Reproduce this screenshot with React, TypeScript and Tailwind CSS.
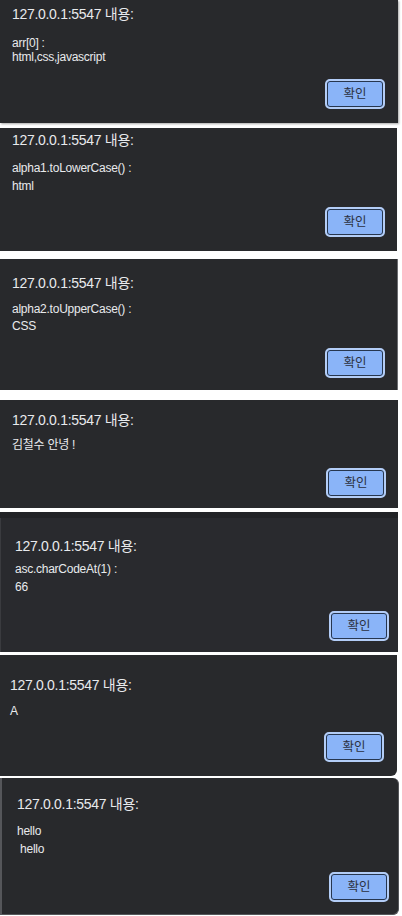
import React from "react";

type D = {
  box: string;
  title: string;
  body: string;
  btnRow: string;
  lines: string[];
};

const FONT = { fontFamily: '"Liberation Sans", "Noto Sans CJK KR", sans-serif' };

function OkButton() {
  return (
    <div className="w-[60px] h-[30px] rounded-[5px] border-2 border-[#b3cdf7] bg-[#8ab4f8] shadow-[inset_0_0_0_1px_#26364f] flex items-center justify-center text-[12.5px] text-[#2a3040]">
      확인
    </div>
  );
}

function Dialog({ d }: { d: D }) {
  return (
    <div className={d.box}>
      <div className={d.title + " text-[14px] tracking-[-0.3px]"}>127.0.0.1:5547 내용:</div>
      <div className={d.body + " text-[12px] tracking-[-0.25px]"}>
        {d.lines.map((l, i) => (
          <div key={i} className="whitespace-pre">
            {l}
          </div>
        ))}
      </div>
      <div className={d.btnRow}>
        <OkButton />
      </div>
    </div>
  );
}

const dialogs: D[] = [
  {
    box: "w-[398px] h-[123px] bg-[#28292c] flex flex-col px-[12px] shadow-[1px_1px_2px_rgba(0,0,0,0.35)]",
    title: "mt-[4px] leading-[20px]",
    body: "mt-[12px] leading-[14px]",
    btnRow: "mt-[15px] flex justify-end pr-[1px]",
    lines: ["arr[0] :", "html,css,javascript"],
  },
  {
    box: "w-[397px] h-[123px] bg-[#28292c] flex flex-col px-[12px]",
    title: "mt-[2px] leading-[20px]",
    body: "mt-[9px] leading-[18px]",
    btnRow: "mt-[12px] flex justify-end",
    lines: ["alpha1.toLowerCase() :", "html"],
  },
  {
    box: "w-[398px] h-[131px] bg-[#28292c] flex flex-col px-[12px] border-r border-[#6b6c70]",
    title: "mt-[14px] leading-[20px]",
    body: "mt-[8px] leading-[17px]",
    btnRow: "mt-[13px] flex justify-end",
    lines: ["alpha2.toUpperCase() :", "CSS"],
  },
  {
    box: "w-[398px] h-[108px] bg-[#28292c] flex flex-col px-[12px]",
    title: "mt-[10px] leading-[20px]",
    body: "mt-[6px] leading-[18px]",
    btnRow: "mt-[14px] flex justify-end",
    lines: ["김철수 안녕 !"],
  },
];

const dialog5: D = {
  box: "w-[398px] h-[134px] bg-[#292a2e] flex flex-col pl-[14px] pr-[9px] border-l border-[#3a3b3f]",
  title: "mt-[18px] leading-[20px]",
  body: "mt-[4px] leading-[18px]",
  btnRow: "mt-[15px] flex justify-end",
  lines: ["asc.charCodeAt(1) :", "66"],
};

const dialog6: D = {
  box: "w-[397px] h-[121px] bg-[#28292c] flex flex-col pl-[10px] pr-[13px] rounded-br-[6px]",
  title: "mt-[20px] leading-[20px]",
  body: "mt-[7px] leading-[18px]",
  btnRow: "mt-[12px] flex justify-end",
  lines: ["A"],
};

const dialog7: D = {
  box: "w-[399px] h-[137px] bg-[#28292c] flex flex-col pl-[15px] pr-[9px] border-l-2 border-r border-b border-[#55565a] rounded-r-[6px]",
  title: "mt-[16px] leading-[20px]",
  body: "mt-[8px] leading-[18px]",
  btnRow: "mt-[14px] flex justify-end",
  lines: ["hello", " hello"],
};

export default function App() {
  return (
    <div className="w-[402px] h-[916px] bg-white text-[#e8eaed] flex flex-col overflow-hidden" style={FONT}>
      <Dialog d={dialogs[0]} />
      <div className="h-[5px]" />
      <Dialog d={dialogs[1]} />
      <div className="h-[8px]" />
      <Dialog d={dialogs[2]} />
      <div className="h-[10px]" />
      <Dialog d={dialogs[3]} />
      <div className="h-[4px]" />
      <div className="w-[398px] h-[6px] bg-[#222326]" />
      <Dialog d={dialog5} />
      <div className="h-[3px]" />
      <Dialog d={dialog6} />
      <div className="h-[2px]" />
      <Dialog d={dialog7} />
    </div>
  );
}
